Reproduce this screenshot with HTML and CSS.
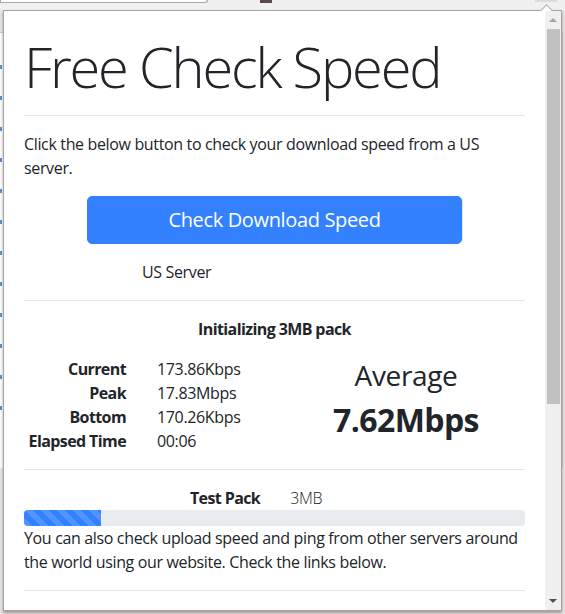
FILE: index.html
```html
<!DOCTYPE html>
<html lang="en">
<head>
  <meta charset="UTF-8">
  <meta name="viewport" content="width=device-width, initial-scale=1.0">
  <title>Free Check Speed</title>
  <link rel="stylesheet" href="styles.css">
</head>
<body>
  <div class="chrome">
    <div class="urlbar"></div>
    <div class="ext-icon"></div>
    <div class="ext-active"></div>
  </div>

  <div class="page">
    <div class="page-rule"></div>
    <div class="page-links">
      <span></span><span></span><span></span><span></span><span></span><span></span>
      <span></span><span></span><span></span><span></span><span></span><span></span>
    </div>
  </div>
  <div class="page-footer"></div>

  <div class="popup">
    <div class="notch"></div>
    <div class="viewport">
      <main class="content">
        <h1 class="display">Free Check Speed</h1>
        <hr>
        <p>Click the below button to check your download speed from a US server.</p>
        <button class="btn-check">Check Download Speed</button>
        <div class="server">US Server</div>
        <hr>

        <div class="status">Initializing 3MB pack</div>
        <div class="results">
          <dl class="stats">
            <dt>Current</dt><dd>173.86Kbps</dd>
            <dt>Peak</dt><dd>17.83Mbps</dd>
            <dt>Bottom</dt><dd>170.26Kbps</dd>
            <dt>Elapsed Time</dt><dd>00:06</dd>
          </dl>
          <div class="average">
            <h3>Average</h3>
            <h2>7.62Mbps</h2>
          </div>
        </div>
        <hr>

        <div class="pack"><b>Test Pack</b><span>3MB</span></div>
        <div class="progress">
          <div class="progress-bar" style="width: 15.4%"></div>
        </div>
        <p>You can also check upload speed and ping from other servers around the world using our website. Check the links below.</p>
        <hr>
      </main>

      <div class="scrollbar">
        <div class="arrow up"></div>
        <div class="track"><div class="thumb"></div></div>
        <div class="arrow down"></div>
      </div>
    </div>
  </div>
</body>
</html>
```

FILE: styles.css
```css
:root {
  --primary: #3381ff;
  --dark: #212529;
  --rule: #e5e5e5;
  --chrome: #f0f0f0;
}

* {
  box-sizing: border-box;
  margin: 0;
  padding: 0;
}

body {
  font-family: 'Open Sans', 'Noto Sans', sans-serif;
  font-size: 16px;
  line-height: 1.5;
  letter-spacing: -0.35px;
  color: var(--dark);
  background: #e9e7e3;
  width: 565px;
  height: 614px;
  overflow: hidden;
  position: relative;
}

/* browser behind the popup */
.chrome {
  height: 10px;
  background: var(--chrome);
  display: flex;
  align-items: flex-start;
}

.urlbar {
  width: 208px;
  height: 3px;
  background: white;
  border: 1px solid #a9a9a9;
  border-top: none;
  border-bottom-right-radius: 3px;
}

.ext-icon {
  width: 12px;
  height: 3px;
  margin-left: 52px;
  background: #5a4a4a;
}

.ext-active {
  width: 22px;
  height: 2px;
  margin-left: 263px;
  background: #dcdcdc;
}

.page {
  height: 436px;
  width: 563px;
  background: white;
  border-right: 1px solid #cfcfcf;
}

.page-rule {
  height: 1px;
  margin-top: 22px;
  background: #c9c9c9;
}

.page-links {
  display: flex;
  flex-direction: column;
  gap: 27px;
  padding-top: 32px;
}

.page-links span {
  width: 2px;
  height: 4px;
  background: #5b8fd6;
}

.page-footer {
  width: 57px;
  height: 20px;
  margin: 155px 0 0 190px;
  background: #f3f3f3;
  border-right: 2px solid #d6d3ce;
}

/* extension popup */
.popup {
  position: absolute;
  left: 3px;
  top: 10px;
  width: 559px;
  height: 601px;
  background: white;
  border: 1px solid #a6a6a6;
  box-shadow: 0 2px 3px rgba(0, 0, 0, 0.35);
}

.notch {
  position: absolute;
  top: -5px;
  left: 538px;
  width: 9px;
  height: 9px;
  background: white;
  border-left: 1px solid #a6a6a6;
  border-top: 1px solid #a6a6a6;
  transform: rotate(45deg);
}

.viewport {
  display: flex;
  height: 100%;
  position: relative;
}

.content {
  flex: 1;
  overflow: hidden;
  padding: 22px 20px 0 20px;
}

.scrollbar {
  width: 16px;
  background: var(--chrome);
  display: flex;
  flex-direction: column;
}

.arrow {
  height: 18px;
  display: flex;
  align-items: center;
  justify-content: center;
}

.arrow::before {
  content: "";
  border-left: 4px solid transparent;
  border-right: 4px solid transparent;
}

.arrow.up::before {
  border-bottom: 4px solid #a3a3a3;
}

.arrow.down::before {
  border-top: 4px solid #505050;
}

.track {
  flex: 1;
  padding: 0 1px 0 2px;
}

.thumb {
  height: 375px;
  background: #c1c1c1;
}

/* page content */
.display {
  font-size: 56px;
  font-weight: 300;
  line-height: 1.2;
  letter-spacing: -2.2px;
}

hr {
  border: none;
  border-top: 1px solid var(--rule);
  margin: 16px 0;
}

.display + hr {
  margin-top: 15px;
}

p {
  margin-bottom: 16px;
}

b,
.status,
.stats dt {
  font-weight: 700;
  letter-spacing: -0.6px;
}

.btn-check {
  display: block;
  width: 75%;
  margin: 0 auto;
  padding: 8px 16px;
  font-family: inherit;
  font-size: 20px;
  line-height: 1.5;
  letter-spacing: inherit;
  color: white;
  background: var(--primary);
  border: 1px solid var(--primary);
  border-radius: 5px;
  box-shadow: 1px 0 0 #dbe7ff;
}

.server {
  margin: 16px 0 0 118px;
}

.status {
  text-align: center;
  margin-bottom: 16px;
}

.results {
  display: grid;
  grid-template-columns: 250px 250px;
}

.stats {
  display: grid;
  grid-template-columns: 102px auto;
  column-gap: 31px;
  white-space: nowrap;
}

.stats dt {
  text-align: right;
}

.average {
  text-align: center;
  padding: 2px 0 0 14px;
}

.average h3 {
  font-size: 28px;
  font-weight: 500;
  line-height: 1.2;
  margin-bottom: 8px;
}

.average h2 {
  font-size: 32px;
  font-weight: 700;
  line-height: 1.2;
  letter-spacing: -0.6px;
}

.pack {
  display: flex;
  justify-content: center;
  gap: 30px;
  padding-right: 37px;
}

.pack span {
  font-weight: 300;
}

.progress {
  height: 16px;
  background: #e9ecef;
  border-radius: 4px;
  overflow: hidden;
}

.progress-bar {
  height: 100%;
  background-color: var(--primary);
  background-image: linear-gradient(45deg,
    rgba(255, 255, 255, 0.15) 25%, transparent 25%, transparent 50%,
    rgba(255, 255, 255, 0.15) 50%, rgba(255, 255, 255, 0.15) 75%,
    transparent 75%, transparent);
  background-size: 16px 16px;
}
```
